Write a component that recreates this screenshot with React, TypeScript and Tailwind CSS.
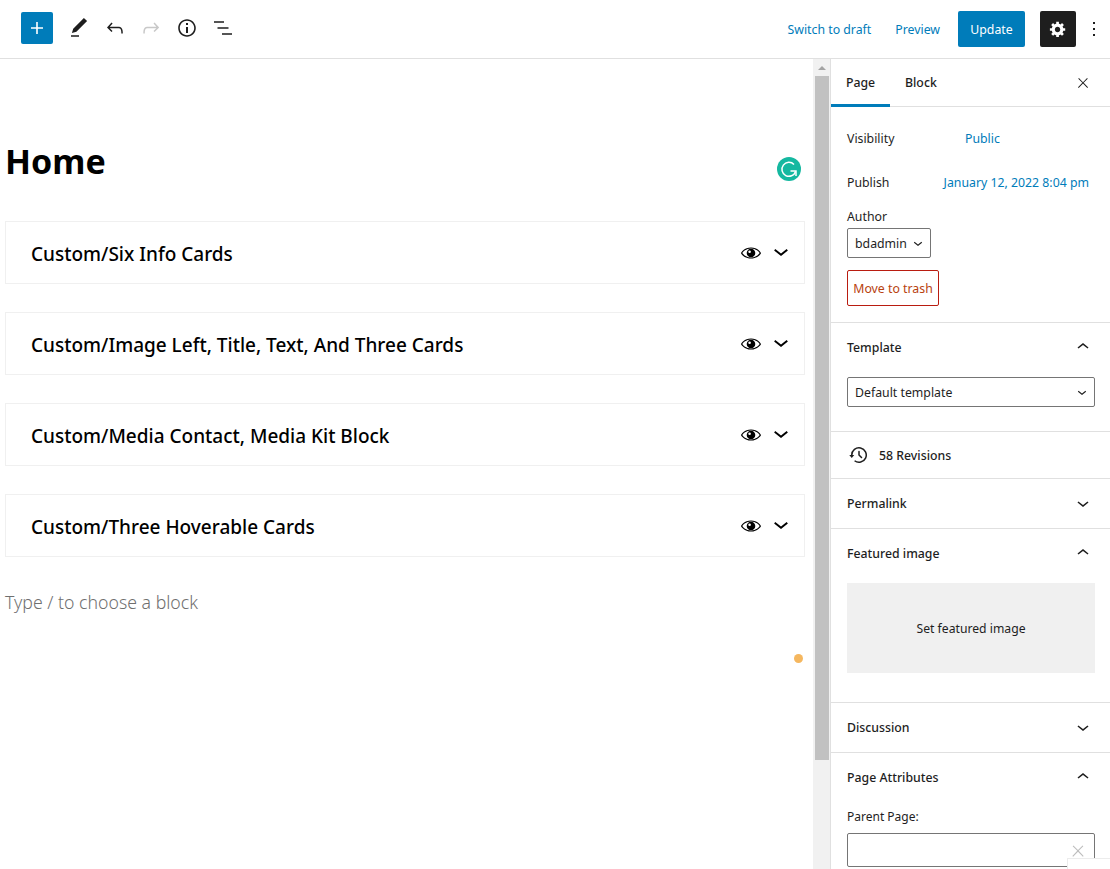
import type { ReactNode } from 'react';

const d = {
  plus: 'M18 11.2h-5.2V6h-1.6v5.2H6v1.6h5.2V18h1.6v-5.2H18z',
  edit: 'M20.1 5.1L16.9 2 6.2 12.7l-1.3 4.4 4.5-1.3L20.1 5.1zM4 20.8h8v-1.5H4v1.5z',
  undo: 'M18.3 11.7c-.6-.6-1.4-.9-2.3-.9H6.7l2.9-3.3-1.1-1-4.5 5L8.5 16l1-1-2.7-2.7H16c.5 0 .9.2 1.3.5 1 1 1 3.4 1 4.5v.3h1.5v-.2c0-1.5 0-4.3-1.5-5.7z',
  redo: 'M15.6 6.5l-1.1 1 2.9 3.3H8c-.9 0-1.7.3-2.3.9-1.4 1.5-1.4 4.2-1.4 5.6v.2h1.5v-.3c0-1.1 0-3.5 1-4.5.3-.3.7-.5 1.3-.5h9.2L14.5 15l1.1 1.1 4.6-4.6-4.6-5z',
  info: 'M12 3.2c-4.8 0-8.8 3.9-8.8 8.8 0 4.8 3.9 8.8 8.8 8.8 4.8 0 8.8-3.9 8.8-8.8 0-4.8-4-8.8-8.8-8.8zm0 16c-4 0-7.2-3.3-7.2-7.2C4.8 8 8 4.8 12 4.8s7.2 3.3 7.2 7.2c0 4-3.2 7.2-7.2 7.2zM11 17h2v-6h-2v6zm0-8h2V7h-2v2z',
  list: 'M3 5.2h10v1.6H3zM6.5 11.2h11v1.6h-11zM11 17.2h10v1.6H11z',
  more: 'M13 19h-2v-2h2v2zm0-6h-2v-2h2v2zm0-6h-2V5h2v2z',
  close: 'M13 11.8l6.1-6.3-1-1-6.1 6.2-6.1-6.2-1 1 6.1 6.3-6.5 6.7 1 1 6.5-6.6 6.5 6.6 1-1z',
  down: 'M17.5 11.6L12 16l-5.5-4.4.9-1.2L12 14l4.5-3.6 1 1.2z',
  up: 'M6.5 12.4L12 8l5.5 4.4-.9 1.2L12 10l-4.5 3.6-1-1.2z',
  history:
    'M5.5 12h1.75l-2.5 3-2.5-3H4a8 8 0 113.134 6.35l.907-1.194A6.5 6.5 0 105.5 12zm9.53 1.97l-2.28-2.28V8.5a.75.75 0 00-1.5 0V12a.747.747 0 00.218.529l2.5 2.5a.75.75 0 101.06-1.061z',
};

function Icon({ path, className }: { path: string; className?: string }) {
  return (
    <svg viewBox="0 0 24 24" fill="currentColor" className={className ?? 'w-6 h-6'}>
      <path d={path} />
    </svg>
  );
}

function Gear() {
  return (
    <svg viewBox="0 0 20 20" fill="currentColor" className="w-[18px] h-[18px]">
      <path d="M18 12h-2.18c-.17.7-.44 1.35-.81 1.93l1.54 1.54-2.1 2.1-1.54-1.54c-.58.36-1.23.63-1.91.79V19H8v-2.18c-.68-.16-1.33-.43-1.91-.79l-1.54 1.54-2.12-2.12 1.54-1.54c-.36-.58-.63-1.23-.79-1.91H1V9.03h2.17c.16-.7.44-1.35.8-1.94L2.43 5.55l2.1-2.1 1.54 1.54c.58-.37 1.24-.64 1.93-.81V2h3v2.18c.68.16 1.33.43 1.91.79l1.54-1.54 2.12 2.12-1.54 1.54c.36.59.64 1.24.8 1.94H18V12zm-8.5 1.5c1.66 0 3-1.34 3-3s-1.34-3-3-3-3 1.34-3 3 1.34 3 3 3z" />
    </svg>
  );
}

function Eye() {
  return (
    <svg viewBox="0 0 20 20" fill="currentColor" className="w-[20px] h-[20px] text-black">
      <path
        fillRule="evenodd"
        d="M10 4.4C3.4 4.4 0 9.2 0 10s3.4 5.6 10 5.6 10-4.8 10-5.6-3.4-5.6-10-5.6zm0 1.1c-5 0-8 3.4-8.7 4.5.7 1.1 3.7 4.5 8.7 4.5s8-3.4 8.7-4.5c-.7-1.1-3.7-4.5-8.7-4.5z"
      />
      <path
        fillRule="evenodd"
        d="M10 5.7a4.3 4.3 0 100 8.6 4.3 4.3 0 000-8.6zM8.6 7.4a1.3 1.3 0 110 2.6 1.3 1.3 0 010-2.6z"
      />
    </svg>
  );
}

function BlockCard({ title }: { title: string }) {
  return (
    <div className="h-[63px] border border-[#f0f0f0] flex items-center pl-[25px] pr-[8px]">
      <span className="flex-1 text-[19px] font-medium text-black leading-none pt-[3px]">{title}</span>
      <div className="flex items-center gap-[5px] text-black">
        <Eye />
        <Icon path={d.down} className="w-[30px] h-[30px] -mt-[3px]" />
      </div>
    </div>
  );
}

function PanelHeader({ title, open }: { title: string; open?: boolean }) {
  return (
    <div className="flex items-center justify-between h-[49px] pl-4 pr-[15px] text-[12.3px] font-medium text-[#1e1e1e]">
      <span className="pt-[2px]">{title}</span>
      <Icon path={open ? d.up : d.down} className="w-6 h-6 -mt-[2px]" />
    </div>
  );
}

function Panel({ children }: { children: ReactNode }) {
  return <div className="border-b border-[#e0e0e0]">{children}</div>;
}

export default function App() {
  return (
    <div className="w-[1110px] h-[869px] overflow-hidden relative bg-white flex flex-col font-['Noto_Sans','Open_Sans',sans-serif] text-[#1e1e1e]">
      {/* Top bar */}
      <header className="h-[59px] shrink-0 border-b border-[#e0e0e0] flex items-center pl-[21px] pr-[4px]">
        <div className="w-8 h-8 -mt-[2px] bg-[#007cba] rounded-[2px] flex items-center justify-center text-white">
          <Icon path={d.plus} />
        </div>
        <div className="flex items-center gap-3 ml-[14px] -mt-[2px] text-[#1e1e1e]">
          <Icon path={d.edit} />
          <Icon path={d.undo} />
          <Icon path={d.redo} className="w-6 h-6 text-[#c8c8c8]" />
          <Icon path={d.info} />
          <Icon path={d.list} />
        </div>
        <div className="flex-1" />
        <span className="text-[12.3px] text-[#007cba] pt-[2px]">Switch to draft</span>
        <span className="text-[12.3px] text-[#007cba] ml-6 pt-[2px]">Preview</span>
        <div className="w-[67px] h-9 ml-[18px] bg-[#007cba] text-white text-[12.3px] rounded-[2px] flex items-center justify-center pt-[2px]">
          Update
        </div>
        <div className="w-9 h-9 ml-[15px] bg-[#1e1e1e] text-white rounded-[2px] flex items-center justify-center">
          <Gear />
        </div>
        <Icon path={d.more} className="w-6 h-6 ml-[6px]" />
      </header>

      <div className="flex-1 flex min-h-0">
        {/* Editor canvas */}
        <main className="w-[813px] shrink-0 pl-[5px] pr-2 relative">
          <h1 className="text-[34px] font-bold text-black leading-[44px] mt-[80px]">Home</h1>
          <div className="mt-[38px] flex flex-col gap-7">
            <BlockCard title="Custom/Six Info Cards" />
            <BlockCard title="Custom/Image Left, Title, Text, And Three Cards" />
            <BlockCard title="Custom/Media Contact, Media Kit Block" />
            <BlockCard title="Custom/Three Hoverable Cards" />
          </div>
          <p className="mt-[32px] text-[17.7px] leading-[26px] font-light text-[#6f6f6f]">
            Type / to choose a block
          </p>
          {/* Grammarly badge */}
          <div className="absolute left-[777px] top-[98px] w-6 h-6 rounded-full bg-[#15b8a0] flex items-center justify-center">
            <svg viewBox="0 0 24 24" fill="none" stroke="white" strokeWidth="1.5" className="w-6 h-6">
              <path d="M17 7.5A7 7 0 1 0 18.6 14.5" />
              <path d="M13.5 14H19V19" />
            </svg>
          </div>
          <div className="absolute left-[794px] top-[595px] w-[9px] h-[9px] rounded-full bg-[#f5b75f]" />
        </main>

        {/* Scrollbar */}
        <div className="w-[17px] shrink-0 bg-[#f1f1f1] flex flex-col items-center">
          <div className="h-[17px] flex items-center justify-center">
            <div className="w-0 h-0 border-x-[4px] border-x-transparent border-b-[4px] border-b-[#a3a3a3]" />
          </div>
          <div className="w-[14px] h-[684px] bg-[#c1c1c1]" />
        </div>

        {/* Sidebar */}
        <aside className="flex-1 min-w-0 border-l border-[#e0e0e0] overflow-hidden text-[12.3px]">
          <div className="h-[48px] border-b border-[#e0e0e0] flex items-stretch relative">
            <div className="w-[59px] flex items-center justify-center border-b-[3px] border-[#007cba] -mb-px pt-[4px] font-medium">
              Page
            </div>
            <div className="ml-[15px] flex items-center font-medium pt-[2px]">Block</div>
            <div className="flex-1" />
            <div className="flex items-center pr-[19px]">
              <Icon path={d.close} className="w-4 h-4" />
            </div>
          </div>

          <Panel>
            <div className="h-[215px] pl-4 pr-[21px] flex flex-col items-start">
              <div className="w-full flex items-center h-[20px] mt-[22px]">
                <span className="w-[118px]">Visibility</span>
                <span className="text-[#007cba] mt-[1px]">Public</span>
              </div>
              <div className="w-full flex items-center justify-between h-[20px] mt-[24px]">
                <span>Publish</span>
                <span className="text-[#007cba] mt-[1px]">January 12, 2022 8:04 pm</span>
              </div>
              <div className="mt-[14px] h-[20px] flex items-center">Author</div>
              <div className="w-[84px] h-[30px] mt-[1px] border border-[#757575] rounded-[2px] flex items-center pl-[7px] pr-[3px] justify-between">
                <span className="pt-[2px]">bdadmin</span>
                <Icon path={d.down} className="w-[18px] h-[18px]" />
              </div>
              <div className="w-[92px] h-9 mt-3 border border-[#b91c10] rounded-[2px] flex items-center justify-center text-[#b8420f] pt-[2px]">
                Move to trash
              </div>
            </div>
          </Panel>

          <Panel>
            <PanelHeader title="Template" open />
            <div className="px-4 pb-6 pt-[5px]">
              <div className="w-[248px] h-[30px] border border-[#757575] rounded-[2px] flex items-center justify-between pl-[7px] pr-[3px]">
                <span className="pt-[2px]">Default template</span>
                <Icon path={d.down} className="w-[18px] h-[18px]" />
              </div>
            </div>
          </Panel>

          <Panel>
            <div className="h-[46px] flex items-center pl-[16px] font-medium">
              <Icon path={d.history} className="w-[24px] h-[24px] mr-[8px] text-[#1e1e1e]" />
              <span className="pt-[2px]">58 Revisions</span>
            </div>
          </Panel>

          <Panel>
            <PanelHeader title="Permalink" />
          </Panel>

          <Panel>
            <PanelHeader title="Featured image" open />
            <div className="px-4 pt-[5px] pb-[29px]">
              <div className="w-[248px] h-[90px] bg-[#f0f0f0] flex items-center justify-center text-[12.2px] pt-[2px]">
                Set featured image
              </div>
            </div>
          </Panel>

          <Panel>
            <PanelHeader title="Discussion" />
          </Panel>

          <div>
            <PanelHeader title="Page Attributes" open />
            <div className="px-4 pt-[5px]">
              <div className="h-5 flex items-center text-[12px]">Parent Page:</div>
              <div className="w-[248px] h-[34px] mt-[6px] border border-[#757575] rounded-[2px] flex items-center justify-end pr-[7px] text-[#bdbdbd]">
                <Icon path={d.close} className="w-[18px] h-[18px] mt-[2px]" />
              </div>
            </div>
          </div>
        </aside>
      </div>

      {/* Corner of a floating widget cut off by the window */}
      <div className="absolute left-[1067px] top-[858px] w-[60px] h-[30px] bg-white border border-[#ececec]" />
    </div>
  );
}
